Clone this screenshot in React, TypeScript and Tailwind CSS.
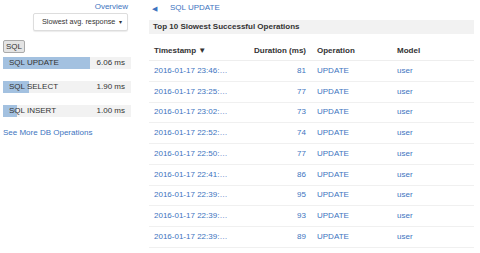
import { useState } from "react";

const ops = [
  { name: "SQL UPDATE", ms: "6.06 ms", pct: 100 },
  { name: "SQL SELECT", ms: "1.90 ms", pct: 30 },
  { name: "SQL INSERT", ms: "1.00 ms", pct: 16 },
];

// only the first nine fit in the window
const rows = [
  { ts: "2016-01-17 23:46:…", dur: 81 },
  { ts: "2016-01-17 23:25:…", dur: 77 },
  { ts: "2016-01-17 23:02:…", dur: 73 },
  { ts: "2016-01-17 22:52:…", dur: 74 },
  { ts: "2016-01-17 22:50:…", dur: 77 },
  { ts: "2016-01-17 22:41:…", dur: 86 },
  { ts: "2016-01-17 22:39:…", dur: 95 },
  { ts: "2016-01-17 22:39:…", dur: 93 },
  { ts: "2016-01-17 22:39:…", dur: 89 },
];

export default function App() {
  const [sort] = useState("Slowest avg. response");
  return (
    <div className="flex h-[253px] w-[480px] items-start overflow-hidden bg-white font-['Liberation_Sans',Arial,sans-serif] text-[8px] text-[#333]">
      {/* left: db operations */}
      <div className="flex w-[131px] shrink-0 flex-col pl-[3px] pt-[2px]">
        <div className="flex h-[10px] items-center justify-end pr-[3px] leading-[10px] text-[#3d74c0]">Overview</div>
        <div className="mr-[3px] mt-[1px] flex h-[18px] w-[95px] items-center self-end whitespace-nowrap rounded-[2px] border border-[#ddd] bg-white pl-[8px] pr-[5px] text-[7.3px] shadow-[0_1px_1px_rgba(0,0,0,0.08)]">
          <span className="flex-1">{sort}</span>
          <span className="text-[6px] leading-none">▾</span>
        </div>
        <button className="mt-[9px] flex h-[13px] w-[22px] items-center justify-center rounded-[2px] border border-[#aaa] bg-[#e4e4e4] leading-none text-[#333]">
          SQL
        </button>
        <div className="mt-[4px] flex flex-col gap-[12px]">
          {ops.map((o) => (
            <div key={o.name} className="relative flex h-[12px] items-center bg-[#f2f2f2]">
              <div className="absolute inset-y-0 left-0 bg-[#a3c1e0]" style={{ width: `${(o.pct / 100) * 87}px` }} />
              <span className="relative pl-[6px] leading-none">{o.name}</span>
              <span className="relative ml-auto pr-[6px] leading-none">{o.ms}</span>
            </div>
          ))}
        </div>
        <a className="mt-[11px] leading-[10px] text-[#3d74c0]">See More DB Operations</a>
      </div>

      {/* right: slowest operations */}
      <div className="ml-[18px] flex w-[325px] flex-col pt-[2px]">
        <div className="flex h-[12px] shrink-0 items-center leading-none text-[#3d74c0]">
          <span className="ml-[3px] text-[7px]">◀</span>
          <span className="ml-[13px]">SQL UPDATE</span>
        </div>
        <div className="mt-[6px] flex h-[14px] shrink-0 items-center bg-[#f2f2f2] pl-[4px] font-bold leading-none">
          Top 10 Slowest Successful Operations
        </div>
        <div className="mt-[8px] flex h-[19px] shrink-0 items-center border-b border-[#eee] px-[5px] font-bold">
          <div className="w-[100px]">Timestamp ▼</div>
          <div className="w-[52px] text-right">Duration (ms)</div>
          <div className="ml-[11px] w-[80px]">Operation</div>
          <div className="flex-1">Model</div>
        </div>
        {rows.map((r, i) => (
          <div key={i} className="flex h-[20.75px] shrink-0 items-center border-b border-[#f0f0f0] px-[5px] text-[#3d74c0]">
            <div className="w-[100px] truncate">{r.ts}</div>
            <div className="w-[52px] text-right">{r.dur}</div>
            <div className="ml-[11px] w-[80px]">UPDATE</div>
            <div className="flex-1">user</div>
          </div>
        ))}
      </div>
    </div>
  );
}
